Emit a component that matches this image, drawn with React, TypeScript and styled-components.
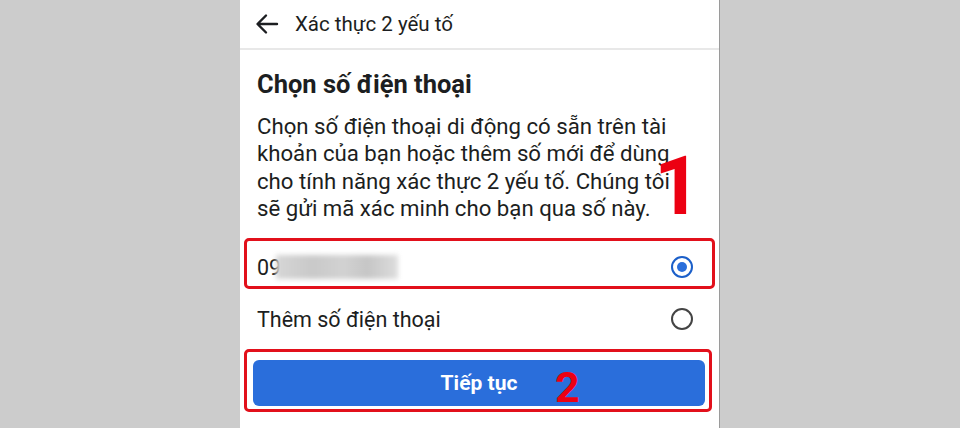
import React from "react";
import styled, { createGlobalStyle } from "styled-components";

const GlobalStyle = createGlobalStyle`
  html, body {
    margin: 0;
    padding: 0;
    background: #cccccc;
    font-family: Roboto, "Noto Sans", "Liberation Sans", sans-serif;
  }
`;

const Page = styled.div`
  width: 960px;
  height: 428px;
  display: flex;
  justify-content: center;
  background: #cccccc;
  overflow: hidden;
`;

const Screen = styled.div`
  position: relative;
  width: 479px;
  height: 428px;
  background: #ffffff;
  border-right: 1px solid #9a9a9a;
  display: flex;
  flex-direction: column;
  color: #1c1e21;
`;

const Header = styled.div`
  height: 50px;
  flex-shrink: 0;
  display: flex;
  align-items: center;
  gap: 16px;
  padding-left: 15px;
  border-bottom: 2px solid #e8e8e8;
  box-sizing: border-box;
`;

const HeaderTitle = styled.span`
  font-size: 20.5px;
  color: #1c1e21;
`;

const Body = styled.div`
  display: flex;
  flex-direction: column;
  padding: 0 4px;
`;

const Intro = styled.div`
  padding: 0 8px 0 13px;
`;

const Heading = styled.h1`
  margin: 19px 0 0;
  font-size: 25.5px;
  line-height: 30px;
  font-weight: 700;
`;

const Description = styled.p`
  margin: 14px 0 0;
  font-size: 22.2px;
  line-height: 27.3px;
`;

const Highlight = styled.div<{ $top: number; $right?: number }>`
  margin-top: ${(p) => p.$top}px;
  margin-right: ${(p) => p.$right ?? 0}px;
  border: 3px solid #e2101b;
  border-radius: 5px;
`;

const OptionRow = styled.div<{ $height: number }>`
  height: ${(p) => p.$height}px;
  display: flex;
  align-items: center;
  justify-content: space-between;
  padding: 7px 19px 0 10px;
  box-sizing: border-box;
  font-size: 21.5px;
`;

const PlainRow = styled(OptionRow)`
  padding: 0 22px 0 13px;
`;

const Number = styled.span`
  display: flex;
  align-items: center;
`;

const Blur = styled.span`
  display: inline-block;
  width: 122px;
  height: 24px;
  margin-left: -5px;
  background: linear-gradient(90deg, #d6d6d6, #c9c9c9 30%, #d2d2d2 55%, #c6c6c6 75%, #dddddd);
  filter: blur(2.5px);
`;

const Radio = styled.span<{ $checked?: boolean }>`
  width: 22px;
  height: 22px;
  box-sizing: border-box;
  border-radius: 50%;
  border: 2px solid ${(p) => (p.$checked ? "#1b5fc9" : "#444444")};
  display: flex;
  align-items: center;
  justify-content: center;
  &::after {
    content: "";
    width: 10px;
    height: 10px;
    border-radius: 50%;
    background: ${(p) => (p.$checked ? "#2a6edb" : "transparent")};
  }
`;

const ButtonFrame = styled(Highlight)`
  padding: 8px 4px 3px 6px;
  height: 63px;
  box-sizing: border-box;
`;

const Button = styled.button`
  width: 100%;
  height: 46px;
  border: none;
  border-radius: 6px;
  background: #2a6edb;
  color: #ffffff;
  font-family: Roboto, "Noto Sans", sans-serif;
  font-size: 21px;
  font-weight: 700;
`;

const Marker = styled.span<{ $size: number; $left: number; $top: number }>`
  position: absolute;
  left: ${(p) => p.$left}px;
  top: ${(p) => p.$top}px;
  font-family: Roboto, "Liberation Sans", Arial, sans-serif;
  font-weight: 700;
  font-size: ${(p) => p.$size}px;
  line-height: 1;
  color: #ec0012;
`;

const BackArrow = () => (
  <svg width="24" height="24" viewBox="0 0 24 24" fill="none">
    <path d="M22 12H3M11 3.5 2.5 12 11 20.5" stroke="#1c1e21" strokeWidth="2.4" strokeLinecap="round" strokeLinejoin="round" />
  </svg>
);

export default function App() {
  return (
    <>
      <GlobalStyle />
      <Page>
        <Screen>
          <Header>
            <BackArrow />
            <HeaderTitle>Xác thực 2 yếu tố</HeaderTitle>
          </Header>
          <Body>
            <Intro>
              <Heading>Chọn số điện thoại</Heading>
              <Description>
                Chọn số điện thoại di động có sẵn trên tài
                <br />
                khoản của bạn hoặc thêm số mới để dùng
                <br />
                cho tính năng xác thực 2 yếu tố. Chúng tôi
                <br />
                sẽ gửi mã xác minh cho bạn qua số này.
              </Description>
            </Intro>
            <Highlight $top={16}>
              <OptionRow $height={45}>
                <Number>
                  09
                  <Blur />
                </Number>
                <Radio $checked />
              </OptionRow>
            </Highlight>
            <PlainRow $height={60}>
              <span>Thêm số điện thoại</span>
              <Radio />
            </PlainRow>
            <ButtonFrame $top={0} $right={3}>
              <Button>Tiếp tục</Button>
            </ButtonFrame>
          </Body>
          <Marker $size={82} $left={414} $top={145}>1</Marker>
          <Marker $size={43} $left={315} $top={366}>2</Marker>
        </Screen>
      </Page>
    </>
  );
}
